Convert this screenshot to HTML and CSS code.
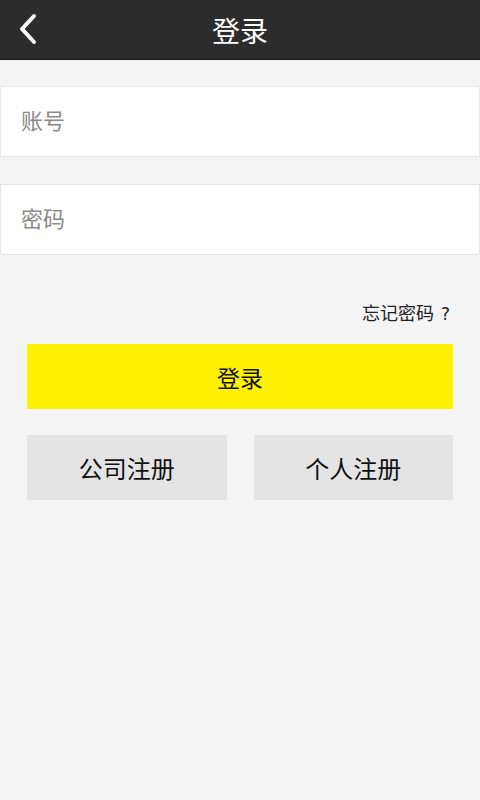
FILE: index.html
```html
<!DOCTYPE html>
<html lang="zh-CN">
  <head>
    <meta charset="UTF-8" />
    <meta name="viewport" content="width=device-width, initial-scale=1.0" />
    <title>登录</title>
    <link rel="stylesheet" href="styles.css">
  </head>
  <body>
    <header class="topbar">
      <a class="back" href="#">
        <svg width="22" height="32" viewBox="0 0 22 32">
          <path d="M17 3 L5 16 L17 29" fill="none" stroke="#fff" stroke-width="4" stroke-linecap="round" stroke-linejoin="round" />
        </svg>
      </a>
      <h1>登录</h1>
    </header>

    <div class="fields">
      <input class="field" type="text" placeholder="账号" />
      <input class="field" type="password" placeholder="密码" />
    </div>

    <div class="forgot"><a href="#">忘记密码<span class="q">?</span></a></div>

    <div class="actions">
      <button class="login">登录</button>
      <div class="register">
        <button class="reg">公司注册</button>
        <button class="reg">个人注册</button>
      </div>
    </div>
  </body>
</html>
```

FILE: styles.css
```css
body {
  margin: 0;
  background: #f4f4f4;
  font-family: "Noto Sans CJK SC", "Noto Sans", sans-serif;
  color: #111;
}
.topbar {
  height: 59px;
  background: #2c2c2c;
  border-bottom: 1px solid #1a1a1a;
  display: flex;
  align-items: center;
  justify-content: center;
  position: relative;
}
.topbar h1 {
  margin: 0;
  color: #fff;
  font-size: 28px;
  font-weight: normal;
}
.back {
  position: absolute;
  left: 17px;
  top: 13px;
  display: block;
  height: 32px;
}
.fields {
  display: flex;
  flex-direction: column;
  gap: 27px;
  margin-top: 26px;
}
.field {
  height: 71px;
  box-sizing: border-box;
  border: 1px solid #e6e6e6;
  background: #fff;
  padding: 0 20px 6px;
  font-family: inherit;
  font-size: 22px;
  outline: none;
  margin: 0;
}
.field::placeholder {
  color: #8a8a8a;
}
.forgot {
  text-align: right;
  padding: 0 30px 0 0;
  margin-top: 44px;
  height: 26px;
  line-height: 26px;
}
.forgot a {
  color: #222;
  font-size: 18px;
  text-decoration: none;
}
.forgot .q {
  margin-left: 7px;
  font-family: "DejaVu Sans", sans-serif;
  font-size: 17px;
  line-height: 1;
}
.actions {
  padding: 0 27px;
  margin-top: 19px;
}
button {
  border: none;
  border-radius: 0;
  font-family: inherit;
  font-size: 23px;
  color: #111;
  cursor: pointer;
  margin: 0;
}
.login {
  width: 100%;
  height: 65px;
  background: #fff200;
}
.register {
  display: grid;
  grid-template-columns: 1fr 1fr;
  gap: 27px;
  margin-top: 26px;
}
.reg {
  height: 65px;
  background: #e4e4e4;
  font-size: 24px;
}
```
